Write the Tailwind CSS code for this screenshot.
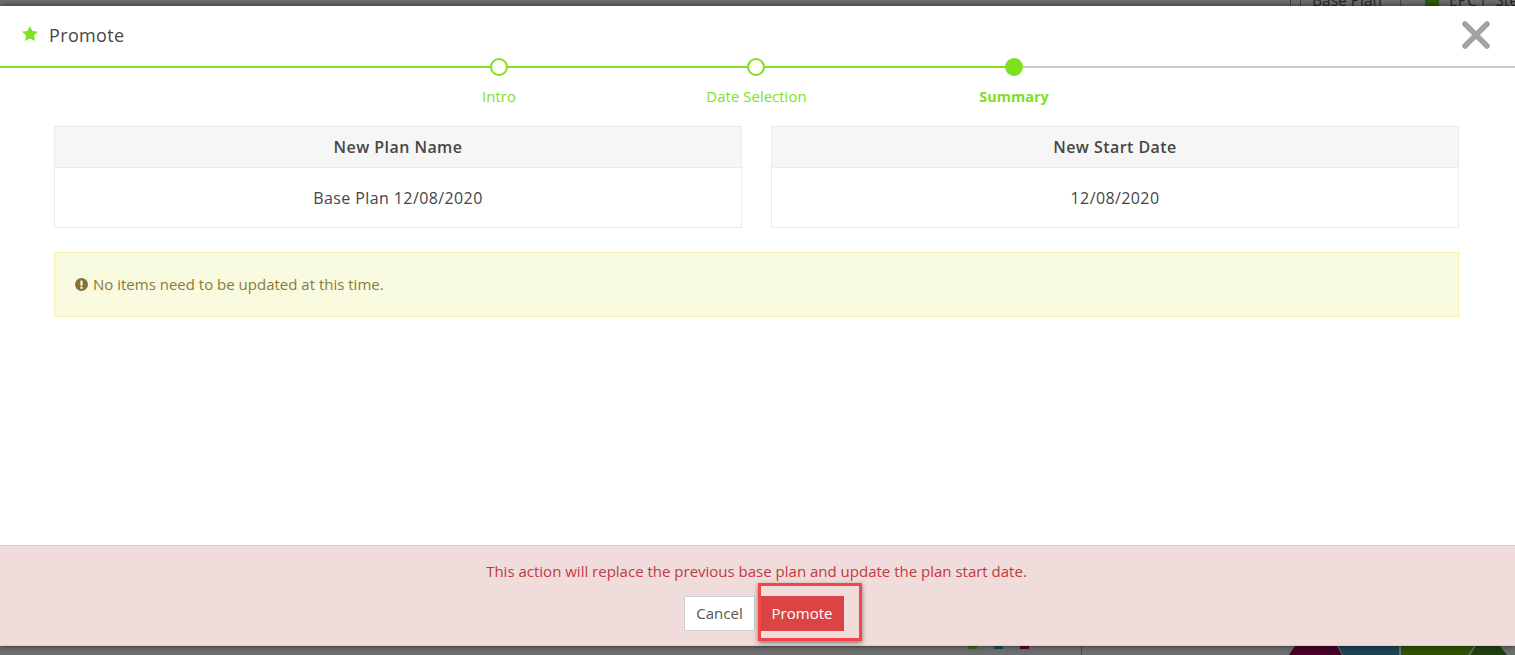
<!DOCTYPE html>
<html lang="en">
<head>
    <meta charset="UTF-8">
    <title>Promote</title>
    <script src="https://cdn.jsdelivr.net/npm/@tailwindcss/browser@4"></script>
</head>
<body class="relative h-[655px] w-[1515px] overflow-hidden bg-[#6e6e6e] font-['Open_Sans',sans-serif] text-[#464646]">

    <!-- page behind the backdrop -->
    <div class="absolute left-[1290px] top-[-8px] flex h-[17px] items-center whitespace-nowrap text-[15.5px] text-[#262626]">
        <span class="mr-[11px] h-[13px] w-[11px] border border-[#2f4f14]"></span>
        <span class="mr-[18px]">Base Plan</span>
        <span class="mr-[24px] h-[17px] w-px bg-[#4a4a4a]"></span>
        <span class="mr-[10px] h-[13px] w-[14px] bg-[#2c5a0a]"></span>
        <span class="mr-[2px]">EPC</span>
        <span class="mr-[8px]">|</span>
        <span>Ste</span>
    </div>
    <div class="absolute left-[968px] top-[646px] flex gap-[17px]">
        <span class="h-[3px] w-[9px] bg-[#3e6b10]"></span>
        <span class="h-[3px] w-[9px] bg-[#1d4a5a]"></span>
        <span class="h-[3px] w-[9px] bg-[#5c0034]"></span>
    </div>
    <div class="absolute left-[1081px] top-[646px] h-[9px] w-px bg-[#4a4a4a]"></div>
    <svg class="absolute left-[1280px] top-[646px]" width="235" height="9" viewBox="0 0 235 9">
        <polygon points="9,9 15,0 57,0 62,9" fill="#4a0026"/>
        <polygon points="63,9 58,0 119,0 119,9" fill="#1d4453"/>
        <polygon points="121,9 121,0 194,0 188,9" fill="#2f5205"/>
        <polygon points="190,9 196,0 220,0 227,9" fill="#20400f"/>
    </svg>

    <!-- dialog -->
    <div class="absolute inset-x-0 top-[6px] flex h-[640px] flex-col bg-white shadow-[0_0_6px_rgba(0,0,0,0.6)]">
        <div class="flex h-[52px] shrink-0 items-center justify-between pl-[22px] pr-[25px] pt-[6px]">
            <div class="flex items-center gap-[11px]">
                <svg class="mt-[-2px]" width="16" height="16" viewBox="0 0 24 24" fill="#7fe021"><path d="M12 0l3.6 7.6 8.200 1.100-6 5.700 1.600 8.200L12 18.600l-7.400 4 1.600-8.200-6-5.700 8.200-1.100z"/></svg>
                <span class="text-[18px] leading-[24px] tracking-[0.35px]">Promote</span>
            </div>
            <svg width="28" height="28" viewBox="0 0 28 28" stroke="#a3a3a3" stroke-width="5.5" stroke-linecap="round"><path d="M3 3l22 22M25 3L3 25"/></svg>
        </div>

        <!-- stepper -->
        <div class="flex h-[18px] shrink-0 items-center">
            <div class="h-[2px] flex-1 bg-[#7fe021]"></div>
            <div class="h-[18px] w-[18px] rounded-full border-2 border-[#7fe021] bg-white"></div>
            <div class="h-[2px] w-[239px] bg-[#7fe021]"></div>
            <div class="h-[18px] w-[18px] rounded-full border-2 border-[#7fe021] bg-white"></div>
            <div class="h-[2px] w-[240px] bg-[#7fe021]"></div>
            <div class="h-[18px] w-[18px] rounded-full bg-[#7fe021]"></div>
            <div class="h-[2px] w-[492px] bg-[#c9c9c9]"></div>
        </div>
        <div class="mt-[10px] flex h-[20px] shrink-0 justify-center pr-[2px] text-center text-[15px] leading-[20px] text-[#7fe021]">
            <div class="w-[257.5px]">Intro</div>
            <div class="w-[257.5px]">Date Selection</div>
            <div class="w-[257.5px] pt-px text-[14.5px] font-bold">Summary</div>
        </div>

        <!-- body -->
        <div class="flex-1 px-[54px] pr-[56px] pt-[20px]">
            <div class="grid grid-cols-2 gap-[29px]">
                <div class="h-[102px] border border-[#ebebeb]">
                    <div class="flex h-[41px] items-center justify-center border-b border-[#ebebeb] bg-[#f6f6f6] text-[16px] font-semibold tracking-[0.45px]">New Plan Name</div>
                    <div class="flex h-[59px] items-center justify-center text-[16px] tracking-[0.4px]">Base Plan 12/08/2020</div>
                </div>
                <div class="h-[102px] border border-[#ebebeb]">
                    <div class="flex h-[41px] items-center justify-center border-b border-[#ebebeb] bg-[#f6f6f6] text-[16px] font-semibold tracking-[0.45px]">New Start Date</div>
                    <div class="flex h-[59px] items-center justify-center text-[16px] tracking-[0.4px]">12/08/2020</div>
                </div>
            </div>
            <div class="mt-[24px] flex h-[65px] items-center gap-[5px] border border-[#f5efb0] bg-[#f9fbe1] pl-[20px] text-[15px] text-[#8a7a3a]">
                <svg width="13" height="13" viewBox="0 0 16 16"><circle cx="8" cy="8" r="8" fill="#857232"/><rect x="6.600" y="3" width="2.800" height="6.500" rx="0.800" fill="#f9fbe1"/><circle cx="8" cy="12" r="1.600" fill="#f9fbe1"/></svg>
                <span>No items need to be updated at this time.</span>
            </div>
        </div>

        <!-- footer -->
        <div class="flex h-[101px] shrink-0 flex-col items-center border-y border-y-[#e3c9cc] bg-[#f1dcdc]">
            <p class="mt-[15px] pr-[2px] text-[15px] leading-[20px] text-[#c0393f]">This action will replace the previous base plan and update the plan start date.</p>
            <div class="mt-[15px] flex gap-[5px] pl-[13px]">
                <button class="h-[35px] w-[71px] border border-[#cfcfcf] bg-white text-[15px] text-[#555]">Cancel</button>
                <button class="h-[35px] w-[84px] bg-[#db4444] text-[15px] font-medium text-white">Promote</button>
            </div>
        </div>
    </div>

    <!-- annotation box -->
    <div class="absolute left-[758px] top-[583px] h-[58px] w-[104px] border-[3px] border-[#f44646] shadow-[0_2px_5px_rgba(0,0,0,0.45)]"></div>
</body>
</html>
